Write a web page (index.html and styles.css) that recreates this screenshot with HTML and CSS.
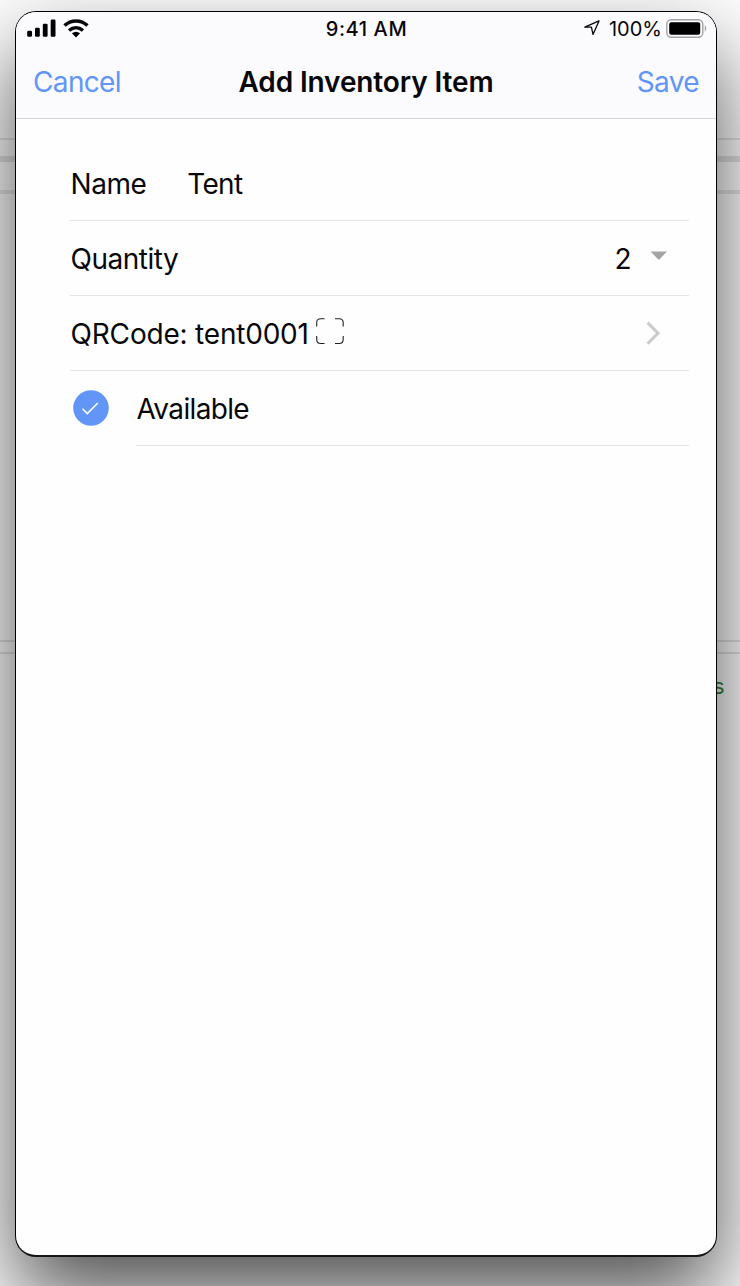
FILE: index.html
```html
<!DOCTYPE html>
<html lang="en">
<head>
<meta charset="utf-8">
<title>Add Inventory Item</title>
<link rel="stylesheet" href="styles.css">
</head>
<body>
<div class="backdrop" aria-hidden="true"><span class="backdrop-text">s</span></div>
<main class="phone">
  <header class="top">
    <div class="status">
      <div class="signal">
        <svg class="bars" width="29" height="18" viewBox="0 0 29 18"><rect x="0.2" y="11.7" width="4.8" height="6" rx="1.2"/><rect x="8" y="8.7" width="4.8" height="9" rx="1.2"/><rect x="15.8" y="4.7" width="4.8" height="13" rx="1.2"/><rect x="23.7" y="0.5" width="4.8" height="17.2" rx="1.2"/></svg>
        <svg class="wifi" width="26" height="19" viewBox="0 0 26 19"><g fill="none" stroke="#08080a" stroke-width="3.4"><path d="M1.5 6.6C8 .4 18 .4 24.5 6.6"/><path d="M6 11.5C10.2 7.8 15.8 7.8 20 11.5"/></g><path d="M8.9 14.3Q13 11.3 17.1 14.3L13 18.6Z"/></svg>
      </div>
      <span class="clock">9:41 AM</span>
      <div class="power">
        <svg class="locate" width="16" height="16" viewBox="0 0 16 16"><path d="M15 .9L.8 7.2H7.4L9 14.4Z" fill="none" stroke="#08080a" stroke-width="1.3" stroke-linejoin="round"/></svg>
        <span class="percent">100%</span>
        <svg class="battery" width="42" height="19" viewBox="0 0 42 19"><rect x=".8" y=".8" width="36" height="17.4" rx="4.5" fill="none" stroke="#a3a2a5" stroke-width="1.4"/><rect x="3.2" y="3.2" width="31" height="12.6" rx="2"/><path d="M38.8 6.1Q41.8 9.5 38.8 12.9Z" fill="#a3a2a5"/></svg>
      </div>
    </div>
    <nav class="bar">
      <a class="action cancel">Cancel</a>
      <h1 class="title">Add Inventory Item</h1>
      <a class="action save">Save</a>
    </nav>
  </header>
  <section class="form">
    <div class="row"><span class="label">Name</span><span class="entry">Tent</span></div>
    <div class="row"><span class="label">Quantity</span><span class="value">2</span><svg class="caret" width="18" height="10" viewBox="0 0 18 10"><path d="M.5.5H17L8.8 9Z" fill="#a4a3a6"/></svg></div>
    <div class="row"><span class="label code">QRCode: tent0001</span><svg class="scan" width="28" height="27" viewBox="0 0 28 27"><path d="M.7 8.5V4.7Q.7.7 4.7.7H8.5M19 .7H23.2Q27.2.7 27.2 4.7V8.5M27.2 18V21.5Q27.2 25.5 23.2 25.5H19M8.5 25.5H4.7Q.7 25.5.7 21.5V18" fill="none" stroke="#222224" stroke-width="1.1"/></svg><svg class="chevron" width="15" height="25" viewBox="0 0 15 25"><path d="M1.6 1.6L12 12.2L1.6 22.8" fill="none" stroke="#cbcacf" stroke-width="3"/></svg></div>
    <div class="row check-row"><svg class="check" width="36" height="36" viewBox="0 0 36 36"><circle cx="18" cy="18" r="17.8" fill="#6196f7"/><path d="M9.5 18.7L14.3 23.6L24.8 13" fill="none" stroke="#fff" stroke-width="1.6"/></svg><div class="check-label"><span class="available">Available</span></div></div>
  </section>
</main>
</body>
</html>
```
FILE: styles.css
```css
* { box-sizing: border-box; }
body { margin: 0; height: 1286px; overflow: hidden; position: relative; padding: 11px 23px 29px 15px; background: #fff; color: #08080a; font-family: Inter, "Liberation Sans", sans-serif; }
.backdrop { position: absolute; inset: 0; background:
  linear-gradient(#e3e3e3,#e3e3e3) 0 138px / 100% 2px no-repeat,
  linear-gradient(#e1e1e1,#e1e1e1) 0 156px / 100% 6px no-repeat,
  linear-gradient(#e5e5e5,#e5e5e5) 0 190px / 100% 4px no-repeat,
  linear-gradient(#e1e1e1,#e1e1e1) 0 640px / 100% 2px no-repeat,
  linear-gradient(#e1e1e1,#e1e1e1) 0 652px / 100% 2px no-repeat, #fdfdfd; }
.backdrop-text { position: absolute; left: 713px; top: 673px; font-size: 22px; line-height: 27px; color: #2f8a38; }
.phone { position: relative; height: 1246px; width: 702px; background: #fefefe; border: 1px solid #000; border-bottom: 2px solid #151515; border-radius: 21px; box-shadow: 0 40px 84px rgba(0,0,0,.68); overflow: hidden; }
.top { height: 107px; background: #fbfafd; border-bottom: 1px solid #d5d5d5; }
.status { display: grid; grid-template-columns: 1fr auto 1fr; align-items: center; height: 32px; padding: 0 8px 0 11px; font-size: 20px; line-height: 24px; }
.signal, .power { display: flex; align-items: center; }
.signal { gap: 7px; }
.power { justify-content: flex-end; }
.locate { margin-right: 9px; }
.battery { margin-left: 4px; }
.clock { padding-top: 2px; margin-left: -2px; font-weight: 500; letter-spacing: .6px; }
.percent { padding-top: 2px; }
.bar { display: grid; grid-template-columns: 1fr auto 1fr; align-items: center; height: 74px; padding: 2px 17px 0; font-size: 28px; line-height: 36px; }
.action { color: #6196f7; letter-spacing: -.65px; }
.save { text-align: right; }
.title { margin: 0; font-size: 28px; font-weight: 600; letter-spacing: -.12px; }
.form { padding: 27px 27px 0 54px; font-size: 28px; line-height: 36px; letter-spacing: -.5px; }
.row { height: 75px; display: flex; align-items: center; border-bottom: 1px solid #e5e5e7; white-space: nowrap; }
.label, .entry, .value, .available { padding-top: 2px; }
.label { margin-left: .6px; }
.code { letter-spacing: -.2px; }
.entry { margin-left: 41px; letter-spacing: -.7px; }
.value { margin-left: auto; }
.caret { margin: -4px 21px 0 19px; }
.scan { margin: -4px 0 0 7px; }
.chevron { margin: 0 28px 0 auto; }
.check-row { border: 0; }
.check { margin: -1px 0 0 3px; flex: none; }
.check-label { flex: 1; height: 75px; margin-left: 27px; display: flex; align-items: center; border-bottom: 1px solid #e5e5e7; }
.available { margin-left: .6px; letter-spacing: -.65px; }
```
